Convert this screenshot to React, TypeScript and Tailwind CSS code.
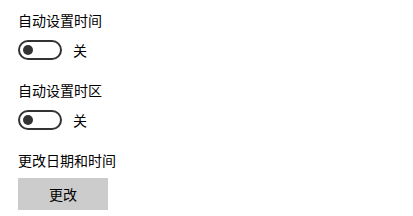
const font = { fontFamily: '"Noto Sans CJK SC", "Microsoft YaHei", sans-serif' };

function Toggle({ label }: { label: string }) {
  return (
    <div className="mt-[10px] flex h-[20px] items-center">
      <div className="flex h-[20px] w-[44px] items-center rounded-full border-2 border-[#333333] px-[3px]">
        <div className="h-[10px] w-[10px] rounded-full bg-[#333333]" />
      </div>
      <span className="ml-[11px] text-[14px] leading-[20px] text-black">{label}</span>
    </div>
  );
}

export default function App() {
  return (
    <div className="h-[216px] w-[413px] bg-white pl-[18px] pt-[10px]" style={font}>
      <div className="text-[14px] leading-[20px] text-black">自动设置时间</div>
      <Toggle label="关" />
      <div className="mt-[20px] text-[14px] leading-[20px] text-black">自动设置时区</div>
      <Toggle label="关" />
      <div className="mt-[20px] text-[14px] leading-[20px] text-black">更改日期和时间</div>
      <button className="mt-[8px] flex h-[32px] w-[90px] items-center justify-center bg-[#cccccc] text-[14px] text-black">
        更改
      </button>
    </div>
  );
}
